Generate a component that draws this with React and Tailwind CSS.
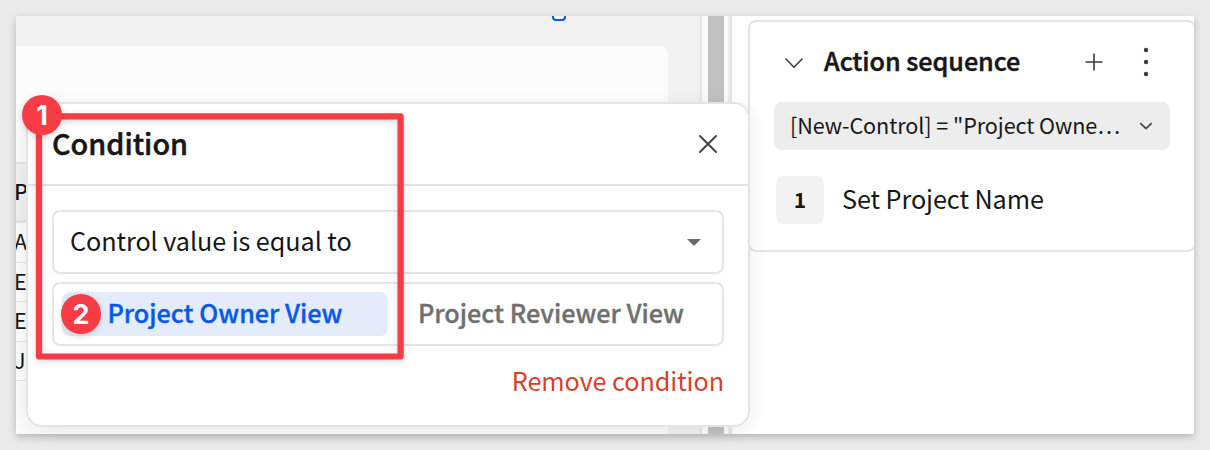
import React from "react";

const tableRows = ["A", "E", "E", "J"];

function Badge({ children, className }) {
  return (
    <div
      className={
        "absolute z-30 flex h-10 w-10 items-center justify-center rounded-full bg-[#f83c46] font-['Inter','Liberation_Sans',sans-serif] text-[27px] font-bold leading-none text-white shadow-[0_2px_6px_rgba(0,0,0,0.15)] " +
        className
      }
    >
      {children}
    </div>
  );
}

function Canvas() {
  return (
    <div className="flex h-full w-[684px] shrink-0 flex-col bg-[#f2f2f2]">
      <div className="h-[30px]">
        <div className="ml-[536px] h-[5px] w-[14px] rounded-b-[4px] border-2 border-t-0 border-[#0859e8] bg-white" />
      </div>
      <div className="w-[652px] grow rounded-tr-[8px] bg-[#fcfcfc] pt-[116px]">
        <div className="flex h-[61px] items-center border-y-2 border-b-[3px] border-[#e4e4e4] bg-[#f0f0f0] pb-[2px] text-[21.6px] font-medium leading-none">
          <span className="-ml-[2px]">P</span>
        </div>
        {tableRows.map((row, i) => (
          <div
            key={i}
            className="flex h-[39.5px] items-center border-b border-[#e4e4e4] pb-[2px] text-[21.6px] leading-none"
          >
            <span className="-ml-[2px]">{row}</span>
          </div>
        ))}
      </div>
    </div>
  );
}

function Scrollbar() {
  return (
    <div className="flex h-full w-8 shrink-0 border-l-2 border-r-2 border-[#e5e5e5] bg-[#fafafa] pl-[6px]">
      <div className="h-full w-4 bg-[#c1c1c1]" />
      <div className="ml-1 h-full w-[2px] bg-[#eeeeee]" />
    </div>
  );
}

function ActionPanel() {
  return (
    <div className="h-full grow bg-white pl-4 pt-1">
      <div className="h-[232px] w-[448px] rounded-[8px] border-2 border-[#e5e5e5] px-6">
        <div className="flex h-20 items-center pl-2">
          <svg width="24" height="24" viewBox="0 0 24 24" fill="none" stroke="#3d3d3d" strokeWidth="1.6" strokeLinecap="round" strokeLinejoin="round">
            <path d="M4 9 12 17.2 20 9" />
          </svg>
          <h2 className="ml-[18px] w-[240px] whitespace-nowrap pb-[3px] text-[25.2px] font-medium leading-none tracking-[-0.04px] [-webkit-text-stroke:0.5px_#171717]">
            Action sequence
          </h2>
          <svg className="ml-[18px]" width="24" height="24" viewBox="0 0 24 24" stroke="#3d3d3d" strokeWidth="1.6">
            <path d="M3.5 12h17M12 3.5v17" />
          </svg>
          <svg className="ml-7" width="24" height="32" viewBox="0 0 24 32" fill="#3d3d3d">
            <circle cx="12" cy="4" r="2.2" />
            <circle cx="12" cy="16" r="2.2" />
            <circle cx="12" cy="28" r="2.2" />
          </svg>
        </div>
        <div className="flex h-12 w-[396px] items-center rounded-[8px] bg-[#ededed] pl-4">
          <span className="w-[344px] whitespace-nowrap pb-[3px] text-[21.6px] leading-none tracking-[-0.08px]">
            [New-Control] = "Project Owne…
          </span>
          <svg width="24" height="24" viewBox="0 0 24 24" fill="none" stroke="#4a4a4a" strokeWidth="1.8" strokeLinecap="round" strokeLinejoin="round">
            <path d="M6.8 9.6 12 14.6 17.2 9.6" />
          </svg>
        </div>
        <div className="ml-[2px] mt-[26px] flex h-12 items-center">
          <div className="flex h-12 w-12 items-center justify-center rounded-[8px] bg-[#f2f2f2] pb-[2px] text-[21px] font-bold leading-none">
            1
          </div>
          <span className="ml-[18px] pb-[3px] text-[25.2px] leading-none tracking-[-0.06px]">
            Set Project Name
          </span>
        </div>
      </div>
    </div>
  );
}

function ConditionDialog() {
  return (
    <div className="absolute left-[26px] top-[102px] z-10 h-[325px] w-[724px] rounded-[16px] border-2 border-[#e4e4e4] bg-white shadow-[0_4px_20px_rgba(0,0,0,0.08)]">
      <div className="flex h-[82px] items-center justify-between border-b-2 border-[#e5e5e5] pl-6 pr-7">
        <h1 className="pb-[1px] text-[28.8px] font-medium leading-none [-webkit-text-stroke:0.5px_#171717]">
          Condition
        </h1>
        <svg width="24" height="24" viewBox="0 0 24 24" stroke="#3d3d3d" strokeWidth="1.8" strokeLinecap="round">
          <path d="M4 4l16 16M20 4 4 20" />
        </svg>
      </div>
      <div className="px-6 pt-6">
        <div className="flex h-16 items-center justify-between rounded-[8px] border-2 border-[#e5e5e5] pl-4 pr-[21px]">
          <span className="pb-[3px] text-[25.2px] leading-none tracking-[-0.06px]">
            Control value is equal to
          </span>
          <svg width="14" height="7" viewBox="0 0 14 7" fill="#6b6b6b">
            <path d="M0 0h14L7 7z" />
          </svg>
        </div>
        <div className="mt-2 flex h-16 items-center rounded-[8px] border-2 border-[#e5e5e5] pl-2 text-[25.2px] font-medium leading-none">
          <div className="flex h-11 w-[326px] items-center rounded-[8px] bg-[#e4ebfa] pb-[3px] pl-[45.5px] text-[#0859e8] [-webkit-text-stroke:0.35px_#0859e8]">
            Project Owner View
          </div>
          <span className="ml-[30px] pb-[3px] text-[#707070] [-webkit-text-stroke:0.35px_#707070]">
            Project Reviewer View
          </span>
        </div>
        <div className="mt-[22px] flex justify-end text-[25.2px] leading-none tracking-[-0.06px] text-[#d8412b]">
          Remove condition
        </div>
      </div>
    </div>
  );
}

function Highlight() {
  return (
    <svg
      className="pointer-events-none absolute left-[26px] top-[102px] z-20 drop-shadow-[0_2px_3px_rgba(0,0,0,0.15)]"
      width="390"
      height="270"
      fill="none"
      stroke="#f83c46"
      strokeWidth="6.2"
      strokeLinejoin="round"
    >
      <path d="M13 14.4H374.6V254.5H13z" />
    </svg>
  );
}

export default function App() {
  return (
    <div className="relative h-[450px] w-[1210px] overflow-hidden bg-[#eaeaea] p-4 font-['Noto_Sans_CJK_SC',sans-serif] text-[#171717]">
      <div className="h-[418px] w-[1178px] shadow-[0_3px_7px_rgba(0,0,0,0.22)]">
        <div className="flex h-full w-full overflow-hidden">
          <Canvas />
          <Scrollbar />
          <ActionPanel />
        </div>
      </div>
      <ConditionDialog />
      <Highlight />
      <Badge className="left-[22px] top-[95px]">1</Badge>
      <Badge className="left-[61px] top-[294px]">2</Badge>
    </div>
  );
}
